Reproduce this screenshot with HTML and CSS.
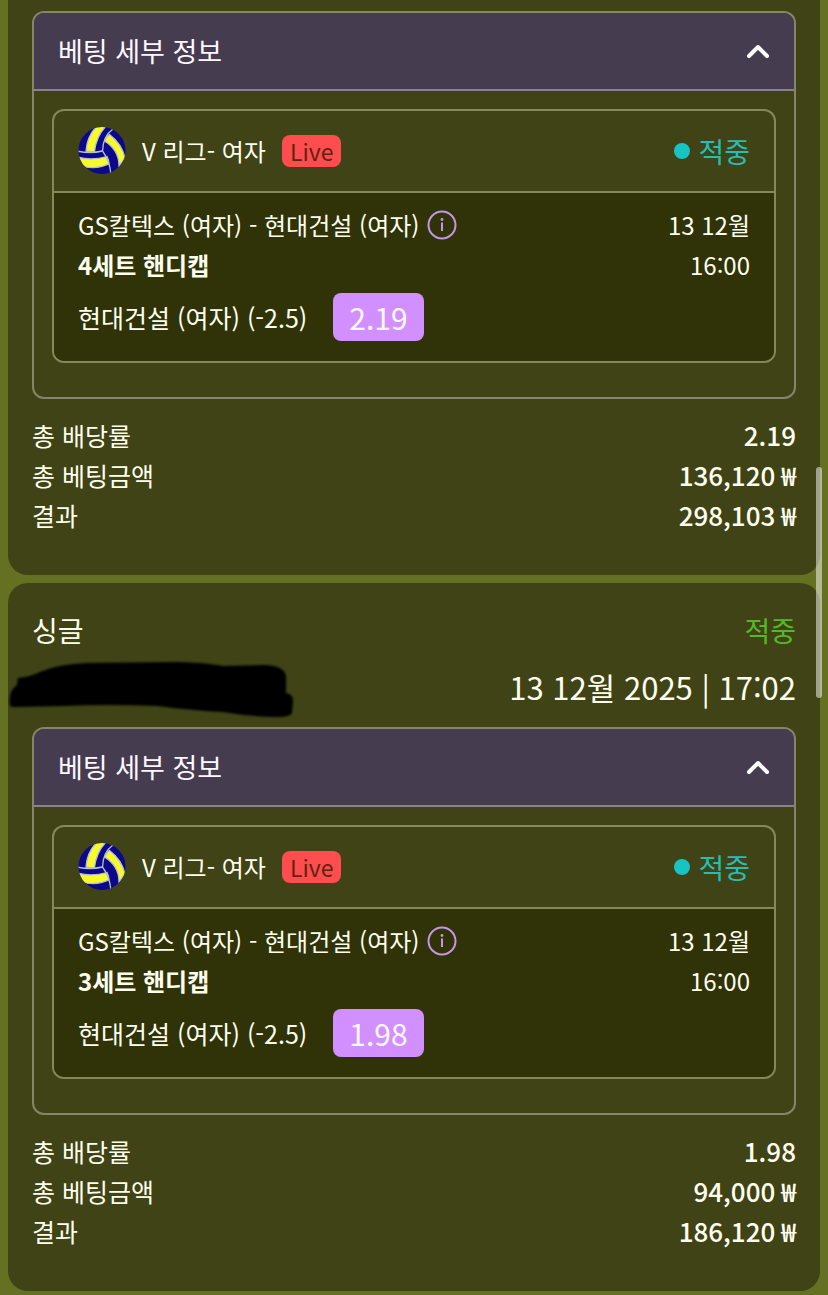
FILE: index.html
```html
<!DOCTYPE html>
<html lang="ko">

<head>
    <meta charset="UTF-8">
    <meta name="viewport" content="width=device-width, initial-scale=1.0">
    <title>베팅 내역</title>
    <link rel="stylesheet" href="styles.css">
</head>

<body>
    <!-- shared icons -->
    <svg class="sprite" aria-hidden="true">
        <symbol id="ball" viewBox="0 0 48 48">
            <clipPath id="ball-clip">
                <circle cx="24" cy="23.5" r="23.5" />
            </clipPath>
            <g clip-path="url(#ball-clip)">
                <rect width="48" height="48" fill="#0c0889" />
                <g fill="#f6fb2c" stroke="#b9bdd6" stroke-width="1.3">
                    <path d="M8 24 Q9 9 19 -1 L28 -1 Q18 10 16.5 24.5 Q12 25 8 24 Z" />
                    <path d="M26.5 14 Q28 10 31.5 7.5 Q44 17 47 31 L41 39 Q41 23 26.5 14 Z" />
                    <path d="M-1 30 Q14 34 29 29.5 Q31 33 31 37 Q18 43 4 39 Z" />
                </g>
                <g fill="none" stroke="#b9bdd6" stroke-width="1.3">
                    <path d="M35 2 Q25 9 24.5 24" />
                    <path d="M-1 24 Q12 27 24.5 24" />
                    <path d="M24.5 24 Q32 34 33 48" />
                </g>
            </g>
        </symbol>
        <symbol id="chevron" viewBox="0 0 24 16">
            <path d="M3 13 L12 4 L21 13" fill="none" stroke="#fff" stroke-width="4" stroke-linecap="round"
                stroke-linejoin="round" />
        </symbol>
        <symbol id="info" viewBox="0 0 30 30">
            <circle cx="15" cy="15" r="13.5" fill="none" stroke="#c795e6" stroke-width="2" />
            <circle cx="15" cy="9.5" r="1.4" fill="#c795e6" />
            <path d="M15 12.5 V21" stroke="#c795e6" stroke-width="2" />
        </symbol>
    </svg>

    <main class="bets">
        <article class="bet bet-scrolled">
            <section class="details">
                <button type="button" class="details-head">
                    베팅 세부 정보
                    <svg class="chevron"><use href="#chevron" /></svg>
                </button>
                <div class="details-body">
                    <div class="event">
                        <div class="event-head">
                            <svg class="ball"><use href="#ball" /></svg>
                            <span>V 리그- 여자</span>
                            <span class="live">Live</span>
                            <span class="status">적중</span>
                        </div>
                        <div class="event-body">
                            <div class="line">
                                <span>GS칼텍스 (여자) - 현대건설 (여자)</span>
                                <button type="button" class="info" aria-label="정보"><svg><use href="#info" /></svg></button>
                                <span class="right">13 12월</span>
                            </div>
                            <div class="line">
                                <strong>4세트 핸디캡</strong>
                                <span class="right">16:00</span>
                            </div>
                            <div class="pick">
                                <span>현대건설 (여자) (-2.5)</span>
                                <span class="odds">2.19</span>
                            </div>
                        </div>
                    </div>
                </div>
            </section>
            <dl class="totals">
                <div><dt>총 배당률</dt><dd>2.19</dd></div>
                <div><dt>총 베팅금액</dt><dd>136,120 ₩</dd></div>
                <div><dt>결과</dt><dd>298,103 ₩</dd></div>
            </dl>
        </article>

        <article class="bet">
            <header class="bet-head">
                <h2>싱글</h2>
                <span class="won">적중</span>
            </header>
            <div class="bet-meta">
                <svg class="scribble" viewBox="0 0 288 60" aria-hidden="true">
                    <path d="M2 46 Q0 32 9 26 L10 19 Q22 18 32 13 Q50 5 80 4 L170 3 Q200 4 215 7 L258 6 Q276 7 278 17 L278 34 Q285 35 285 42 L284 54 Q282 58 270 58 Q245 58 215 53 Q180 51 150 47 Q100 45 55 47 L8 48 Q2 48 2 46 Z" />
                </svg>
                <time datetime="2025-12-13T17:02">13 12월 2025 | 17:02</time>
            </div>
            <section class="details">
                <button type="button" class="details-head">
                    베팅 세부 정보
                    <svg class="chevron"><use href="#chevron" /></svg>
                </button>
                <div class="details-body">
                    <div class="event">
                        <div class="event-head">
                            <svg class="ball"><use href="#ball" /></svg>
                            <span>V 리그- 여자</span>
                            <span class="live">Live</span>
                            <span class="status">적중</span>
                        </div>
                        <div class="event-body">
                            <div class="line">
                                <span>GS칼텍스 (여자) - 현대건설 (여자)</span>
                                <button type="button" class="info" aria-label="정보"><svg><use href="#info" /></svg></button>
                                <span class="right">13 12월</span>
                            </div>
                            <div class="line">
                                <strong>3세트 핸디캡</strong>
                                <span class="right">16:00</span>
                            </div>
                            <div class="pick">
                                <span>현대건설 (여자) (-2.5)</span>
                                <span class="odds">1.98</span>
                            </div>
                        </div>
                    </div>
                </div>
            </section>
            <dl class="totals">
                <div><dt>총 배당률</dt><dd>1.98</dd></div>
                <div><dt>총 베팅금액</dt><dd>94,000 ₩</dd></div>
                <div><dt>결과</dt><dd>186,120 ₩</dd></div>
            </dl>
        </article>
    </main>
    <div class="scroll-thumb"></div>
</body>

</html>
```
FILE: styles.css
```css
* {
    box-sizing: border-box;
}

body {
    margin: 0;
    background-color: #667022;
    color: #fffff0;
    font-family: "Noto Sans CJK KR", sans-serif;
    font-size: 24px;
    line-height: 40px;
}

button {
    font: inherit;
    color: inherit;
    border: none;
    background: none;
    padding: 0;
    cursor: pointer;
}

.sprite {
    position: absolute;
    width: 0;
    height: 0;
}

.bets {
    display: flex;
    flex-direction: column;
    gap: 8px;
    padding: 0 8px 4px;
}

.bet {
    background-color: #3f4315;
    border-radius: 20px;
    padding: 24px 24px 40px;
}

/* top of this card is scrolled out of view */
.bet-scrolled {
    border-radius: 0 0 20px 20px;
    padding-top: 11px;
}

.bet-head {
    display: flex;
    justify-content: space-between;
    align-items: center;
    height: 46px;
    font-size: 28px;
}

.bet-head h2 {
    margin: 0;
    font-size: 28px;
    font-weight: 400;
}

.won {
    color: #55b927;
}

.bet-meta {
    position: relative;
    display: flex;
    justify-content: flex-end;
    align-items: center;
    height: 74px;
    padding-bottom: 6px;
    font-size: 31px;
}

.scribble {
    position: absolute;
    left: -24px;
    top: 6px;
    width: 288px;
    height: 60px;
    filter: blur(1px);
}

.details {
    border: 2px solid #85856b;
    border-radius: 12px;
    overflow: hidden;
}

.details-head {
    display: flex;
    justify-content: space-between;
    align-items: center;
    width: 100%;
    height: 78px;
    padding: 0 24px;
    background-color: #463c50;
    border-bottom: 2px solid #888388;
    color: #fff8ff;
    font-size: 27px;
}

.chevron {
    width: 24px;
    height: 16px;
}

.details-body {
    padding: 18px 18px 34px;
}

.event {
    border: 2px solid #85895a;
    border-radius: 12px;
    overflow: hidden;
}

.event-head {
    display: flex;
    align-items: center;
    height: 82px;
    padding: 0 24px;
    border-bottom: 2px solid #85895a;
}

.ball {
    width: 48px;
    height: 48px;
    margin-right: 16px;
}

.live {
    margin-left: 16px;
    padding: 0 8px;
    border-radius: 8px;
    background-color: #ff4d4f;
    color: #64220e;
    font-size: 23px;
    line-height: 32px;
}

.status {
    display: flex;
    align-items: center;
    gap: 8px;
    margin-left: auto;
    color: #25bdb6;
    font-size: 28px;
}

.status::before {
    content: "";
    width: 16px;
    height: 16px;
    border-radius: 50%;
    background-color: #17c3c3;
}

.event-body {
    padding: 12px 24px 20px;
    background-color: #303307;
}

.line {
    display: flex;
    align-items: center;
    height: 40px;
}

.right {
    margin-left: auto;
}

.info {
    display: flex;
    margin-left: 8px;
}

.info svg {
    width: 30px;
    height: 30px;
}

.pick {
    display: flex;
    align-items: center;
    gap: 26px;
    margin-top: 8px;
    font-size: 25px;
}

.odds {
    padding: 0 16px;
    border-radius: 8px;
    background-color: #d28fff;
    color: #fff8ff;
    font-size: 30px;
    line-height: 48px;
}

.totals {
    margin: 16px 0 0;
    font-size: 25px;
}

.totals div {
    display: flex;
    justify-content: space-between;
}

.totals dd {
    margin: 0;
    font-size: 26px;
    font-weight: 500;
}

.scroll-thumb {
    position: absolute;
    top: 467px;
    right: 6px;
    width: 6px;
    height: 231px;
    border-radius: 3px;
    background-color: rgba(255, 255, 255, 0.5);
}
```
